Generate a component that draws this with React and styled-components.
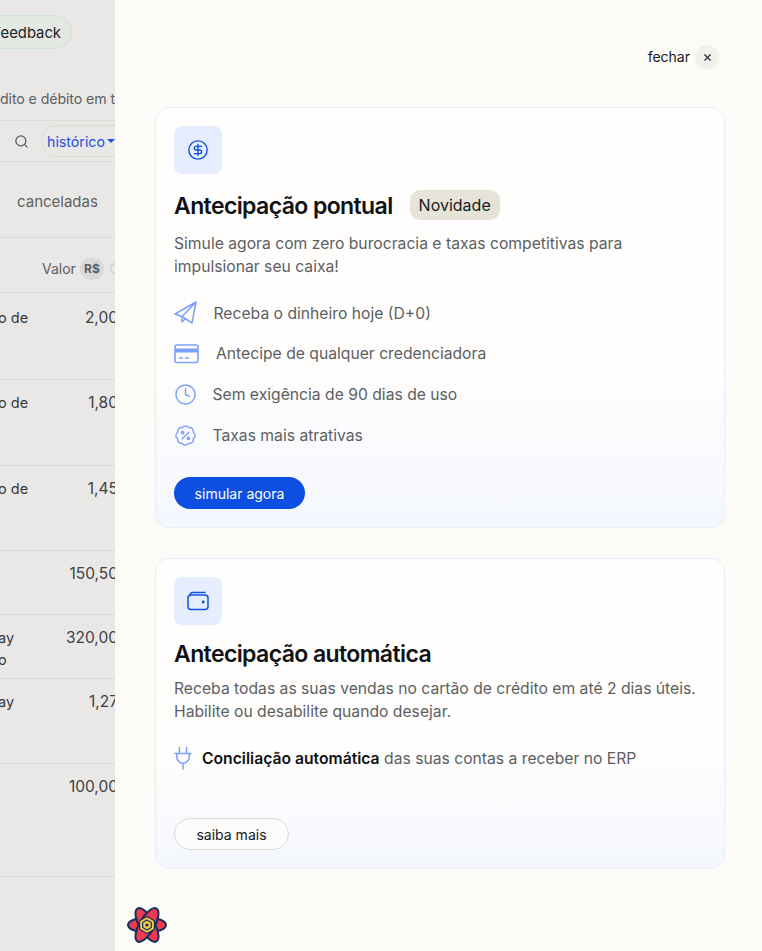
import React from 'react'
import styled, { createGlobalStyle } from 'styled-components'
import { CircleDollarSign, Clock, Search, X } from 'lucide-react'

const Global = createGlobalStyle`
  html, body { margin: 0; padding: 0; height: 100%; }
  body { font-family: "Inter", "Noto Sans", sans-serif; background: #fcfbf8; overflow: hidden; }
  * { box-sizing: border-box; }
`

const rows = [
  { label: 'o de', value: '2,00', height: 87, pad: 14 },
  { label: 'o de', value: '1,80', height: 86, pad: 12 },
  { label: 'o de', value: '1,45', height: 85, pad: 12 },
  { label: '', value: '150,50', height: 64, pad: 12 },
  { label: 'ay', sub: 'o', value: '320,00', height: 64, pad: 12 },
  { label: 'ay', value: '1,27', height: 85, pad: 12 },
  { label: '', value: '100,00', height: 113, pad: 12 },
]

const App = () => (
  <Page>
    <Global />
    <Behind>
      <FeedbackBar>
        <Feedback>Feedback</Feedback>
      </FeedbackBar>
      <Subtitle>dito e débito em todas</Subtitle>
      <Toolbar>
        <Search size={15} strokeWidth={2} color="#56595c" />
        <History>
          histórico<Caret />
        </History>
      </Toolbar>
      <Tabs>canceladas</Tabs>
      <HeadRow>
        Valor <Currency>R$</Currency> <EyeDot />
      </HeadRow>
      {rows.map((row, i) => (
        <Row key={i} $height={row.height} $pad={row.pad}>
          <RowLabel>
            {row.label}
            {row.sub && <br />}
            {row.sub}
          </RowLabel>
          <RowValue>{row.value}</RowValue>
        </Row>
      ))}
    </Behind>

    <Drawer>
      <CloseRow>
        fechar
        <CloseButton>
          <X size={11} strokeWidth={2.4} color="#1d2a3a" />
        </CloseButton>
      </CloseRow>

      <Card $height={421}>
        <IconBox>
          <CircleDollarSign size={22} strokeWidth={1.5} color="#1450e0" />
        </IconBox>
        <TitleRow>
          <Title>Antecipação pontual</Title>
          <Tag>Novidade</Tag>
        </TitleRow>
        <Description $gap={12}>
          Simule agora com zero burocracia e taxas competitivas para
          <br />
          impulsionar seu caixa!
        </Description>
        <Benefits>
          <Benefit>
            <PlaneIcon />
            Receba o dinheiro hoje (D+0)
          </Benefit>
          <Benefit $indent>
            <CardIcon />
            Antecipe de qualquer credenciadora
          </Benefit>
          <Benefit>
            <Clock size={23} strokeWidth={1.5} color="#7e9ffb" />
            Sem exigência de 90 dias de uso
          </Benefit>
          <Benefit>
            <PercentIcon />
            Taxas mais atrativas
          </Benefit>
        </Benefits>
        <Actions>
          <PrimaryButton>simular agora</PrimaryButton>
        </Actions>
      </Card>

      <Card $height={311}>
        <IconBox>
          <WalletIcon />
        </IconBox>
        <TitleRow $compact>
          <Title>Antecipação automática</Title>
        </TitleRow>
        <Description $gap={9}>
          Receba todas as suas vendas no cartão de crédito em até 2 dias úteis.
          <br />
          Habilite ou desabilite quando desejar.
        </Description>
        <PlugLine>
          <PlugIcon />
          <span>
            <strong>Conciliação automática</strong> das suas contas a receber no ERP
          </span>
        </PlugLine>
        <Actions>
          <GhostButton>saiba mais</GhostButton>
        </Actions>
      </Card>
    </Drawer>

    <DevLogo viewBox="0 0 40 40">
      <g fill="#f0384f" stroke="#12305c" strokeWidth="2">
        <ellipse cx="20" cy="20" rx="19" ry="7.5" />
        <ellipse cx="20" cy="20" rx="19" ry="7.5" transform="rotate(60 20 20)" />
        <ellipse cx="20" cy="20" rx="19" ry="7.5" transform="rotate(120 20 20)" />
      </g>
      <polygon points="20,11.5 27.4,15.8 27.4,24.2 20,28.5 12.6,24.2 12.6,15.8" fill="#f5cc4a" stroke="#12305c" strokeWidth="1.2" />
      <polygon points="20,15 24.3,17.5 24.3,22.5 20,25 15.7,22.5 15.7,17.5" fill="none" stroke="#12305c" strokeWidth="1.2" />
      <circle cx="20" cy="20" r="1.6" fill="#12305c" />
    </DevLogo>
  </Page>
)

const PlaneIcon = () => (
  <svg width="24" height="24" viewBox="0 0 24 24" fill="none" stroke="#7e9ffb" strokeWidth="1.5" strokeLinejoin="round" strokeLinecap="round">
    <path d="M22 1 1 13l7 2.700L22 1Zm0 0-4 21-10-6.300V21l3.500-3.500" />
  </svg>
)

const CardIcon = () => (
  <svg width="26" height="20" viewBox="0 0 26 20" fill="none">
    <rect x="1" y="1" width="23" height="17.500" rx="2" stroke="#7e9ffb" strokeWidth="1.600" />
    <rect x="1" y="4.500" width="23" height="4" fill="#7e9ffb" />
    <path d="M5 14h4M11 14h4" stroke="#7e9ffb" strokeWidth="1.300" />
  </svg>
)

const PercentIcon = () => (
  <svg width="23" height="23" viewBox="0 0 24 24" fill="none" stroke="#7e9ffb" strokeWidth="1.500" strokeLinecap="round" strokeLinejoin="round">
    <path d="M3.850 8.620a4 4 0 0 1 4.780-4.770 4 4 0 0 1 6.740 0 4 4 0 0 1 4.780 4.780 4 4 0 0 1 0 6.740 4 4 0 0 1-4.770 4.780 4 4 0 0 1-6.750 0 4 4 0 0 1-4.780-4.770 4 4 0 0 1 0-6.760Z" />
    <path d="m15.500 8.500-7 7" />
    <circle cx="9" cy="9" r="1.200" />
    <circle cx="15" cy="15" r="1.200" />
  </svg>
)

const WalletIcon = () => (
  <svg width="22" height="20" viewBox="0 0 22 20" fill="none" stroke="#1450e0" strokeWidth="1.5" strokeLinecap="round">
    <path d="M3 4.500V4a2.500 2.500 0 0 1 2.500-2.500H18" />
    <rect x="1" y="4" width="20" height="14.500" rx="3" />
    <circle cx="16.200" cy="11" r=".7" fill="#1450e0" />
  </svg>
)

const PlugIcon = () => (
  <svg width="18" height="24" viewBox="0 0 18 24" fill="none" stroke="#7e9ffb" strokeWidth="1.500" strokeLinecap="round">
    <path d="M5.500 1.500V7M12.500 1.500V7M1 7.500h16M2.800 7.500v3.500a6.200 6.200 0 0 0 12.400 0V7.500M9 17.200V23" />
  </svg>
)

const Page = styled.div`
  position: relative;
  display: flex;
  width: 762px;
  height: 951px;
  overflow: hidden;
`
const Behind = styled.div`
  flex: 0 0 115px;
  height: 951px;
  overflow: hidden;
  background: #e9e8e6;
  color: #3f4144;
  font-size: 14px;
`
const FeedbackBar = styled.div`
  display: flex;
  margin-left: -40px;
  padding-top: 15px;
  height: 70px;
`
const Feedback = styled.div`
  display: flex;
  align-items: center;
  justify-content: flex-end;
  width: 112px;
  height: 34px;
  padding: 1px 10px 0 0;
  border: 1px solid #cfe0d4;
  border-radius: 17px;
  background: #e3e9e2;
  color: #1d2226;
  font-size: 14.800px;
  font-weight: 400;
`
const Subtitle = styled.div`
  width: 200px;
  height: 50px;
  padding-top: 20px;
  white-space: nowrap;
  color: #5e6063;
  font-size: 14.200px;
  letter-spacing: -0.100px;
`
const Toolbar = styled.div`
  display: flex;
  align-items: center;
  gap: 12px;
  width: 180px;
  height: 42px;
  padding-left: 14px;
  border-top: 1px solid #dcdbd8;
  border-bottom: 1px solid #dcdbd8;
`
const History = styled.div`
  display: flex;
  align-items: center;
  gap: 2px;
  flex: 0 0 auto;
  height: 32px;
  padding: 0 14px 0 5px;
  border: 1px solid #dcd9cf;
  border-radius: 16px;
  color: #2450dc;
  font-size: 14.200px;
`
const Caret = styled.span`
  border-top: 4px solid #2450dc;
  border-left: 4px solid transparent;
  border-right: 4px solid transparent;
`
const Tabs = styled.div`
  height: 76px;
  padding: 30px 0 0 17px;
  border-bottom: 1px solid #d9d8d6;
  color: #5e6063;
  font-size: 15px;
`
const HeadRow = styled.div`
  display: flex;
  align-items: center;
  gap: 4px;
  width: 180px;
  height: 55px;
  padding: 7px 0 0 42px;
  border-bottom: 1px solid #d9d8d6;
  color: #5e6063;
`
const Currency = styled.span`
  display: flex;
  align-items: center;
  justify-content: center;
  width: 24px;
  height: 22px;
  border-radius: 11px;
  background: #d9d9d9;
  font-size: 12px;
  font-weight: 700;
`
const EyeDot = styled.span`
  width: 11px;
  height: 11px;
  margin-left: 2px;
  border: 1px solid #c4c4c2;
  border-radius: 50%;
`
const Row = styled.div`
  display: flex;
  justify-content: space-between;
  align-items: flex-start;
  width: 118px;
  height: ${p => p.$height}px;
  padding-top: ${p => p.$pad}px;
  line-height: 22px;
  border-bottom: 1px solid #d9d8d6;
`
const RowLabel = styled.div`
  margin-left: -2px;
  color: #35373a;
  font-size: 14.500px;
`
const RowValue = styled.div`
  white-space: nowrap;
  font-size: 15.500px;
`
const Drawer = styled.div`
  flex: 1;
  padding: 43px 37px 0 40px;
  background: #fcfbf8;
`
const CloseRow = styled.div`
  display: flex;
  align-items: center;
  justify-content: flex-end;
  gap: 5px;
  height: 26px;
  margin: 0 6px 38px 0;
  color: #16191d;
  font-size: 14px;
`
const CloseButton = styled.span`
  display: flex;
  align-items: center;
  justify-content: center;
  width: 24px;
  height: 24px;
  margin-top: 2px;
  border-radius: 50%;
  background: #f1f0ea;
`
const Card = styled.section`
  display: flex;
  flex-direction: column;
  height: ${p => p.$height}px;
  margin-bottom: 30px;
  padding: 18px;
  border: 1px solid #e6edfb;
  border-radius: 14px;
  background: linear-gradient(180deg, #fffefc 0%, #fffefc 60%, #f4f7fe 100%);
`
const IconBox = styled.div`
  display: flex;
  align-items: center;
  justify-content: center;
  width: 48px;
  height: 48px;
  border-radius: 8px;
  background: #e5edff;
`
const TitleRow = styled.div`
  display: flex;
  align-items: center;
  gap: 17px;
  height: 30px;
  margin-top: ${p => (p.$compact ? 13 : 16)}px;
`
const Title = styled.h2`
  margin: 0;
  padding-top: 2px;
  color: #0f1114;
  font-size: 23px;
  font-weight: 600;
  letter-spacing: -0.600px;
`
const Tag = styled.span`
  display: flex;
  align-items: center;
  height: 30px;
  padding: 0 9px;
  border-radius: 10px;
  background: #e6e4d8;
  color: #16191d;
  font-size: 16px;
`
const Description = styled.p`
  margin: ${p => p.$gap}px 0 0;
  color: #5c5e62;
  font-size: 15.700px;
  line-height: 23px;
`
const Benefits = styled.ul`
  display: flex;
  flex-direction: column;
  gap: 16.700px;
  margin: 23px 0 0;
  padding: 0;
  list-style: none;
`
const Benefit = styled.li`
  display: flex;
  align-items: center;
  gap: ${p => (p.$indent ? 16 : 15.500)}px;
  height: 24px;
  color: #5c5e62;
  font-size: 15.700px;
`
const PlugLine = styled.div`
  display: flex;
  align-items: center;
  gap: 10px;
  margin-top: 23px;
  color: #5c5e62;
  font-size: 15.700px;

  strong {
    color: #0f1114;
    font-weight: 600;
  }
`
const Actions = styled.div`
  margin-top: auto;
`
const PrimaryButton = styled.button`
  width: 131px;
  height: 32px;
  border: 0;
  border-radius: 16px;
  background: #0d4fe0;
  color: #fff;
  font: 400 14px "Inter", sans-serif;
`
const GhostButton = styled.button`
  width: 115px;
  height: 32px;
  border: 1px solid #dedcd4;
  border-radius: 16px;
  background: #fdfcfa;
  color: #16191d;
  font: 400 14px "Inter", sans-serif;
`
const DevLogo = styled.svg`
  position: absolute;
  left: 127px;
  top: 905px;
  width: 40px;
  height: 40px;
`

export default App
